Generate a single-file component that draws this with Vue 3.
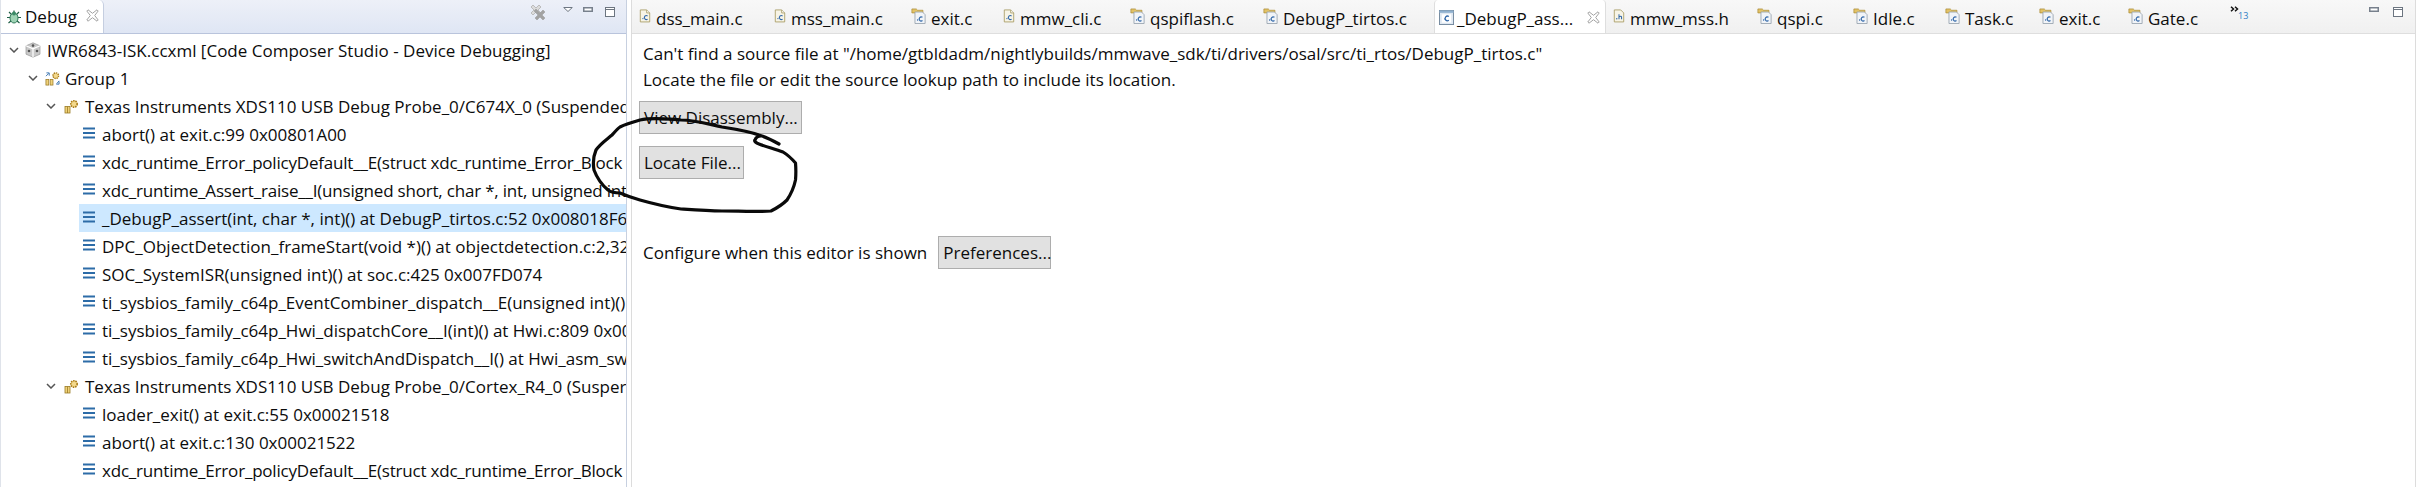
<script setup>
const rows = [
  { level: 0, icon: 'cube', text: 'IWR6843-ISK.ccxml [Code Composer Studio - Device Debugging]' },
  { level: 1, icon: 'group', text: 'Group 1' },
  { level: 2, icon: 'thread', text: 'Texas Instruments XDS110 USB Debug Probe_0/C674X_0 (Suspended' },
  { level: 3, text: 'abort() at exit.c:99 0x00801A00' },
  { level: 3, tight: true, text: 'xdc_runtime_Error_policyDefault__E(struct xdc_runtime_Error_Block' },
  { level: 3, tight: true, text: 'xdc_runtime_Assert_raise__I(unsigned short, char *, int, unsigned int' },
  { level: 3, selected: true, text: '_DebugP_assert(int, char *, int)() at DebugP_tirtos.c:52 0x008018F6' },
  { level: 3, text: 'DPC_ObjectDetection_frameStart(void *)() at objectdetection.c:2,32' },
  { level: 3, text: 'SOC_SystemISR(unsigned int)() at soc.c:425 0x007FD074' },
  { level: 3, text: 'ti_sysbios_family_c64p_EventCombiner_dispatch__E(unsigned int)()' },
  { level: 3, text: 'ti_sysbios_family_c64p_Hwi_dispatchCore__I(int)() at Hwi.c:809 0x00' },
  { level: 3, text: 'ti_sysbios_family_c64p_Hwi_switchAndDispatch__I() at Hwi_asm_sw' },
  { level: 2, icon: 'thread', text: 'Texas Instruments XDS110 USB Debug Probe_0/Cortex_R4_0 (Susper' },
  { level: 3, text: 'loader_exit() at exit.c:55 0x00021518' },
  { level: 3, text: 'abort() at exit.c:130 0x00021522' },
  { level: 3, tight: true, text: 'xdc_runtime_Error_policyDefault__E(struct xdc_runtime_Error_Block' }
]
const tabs = [
  { name: 'dss_main.c', icon: 'file', width: 135 },
  { name: 'mss_main.c', icon: 'file', width: 137 },
  { name: 'exit.c', icon: 'linked', width: 92 },
  { name: 'mmw_cli.c', icon: 'file', width: 127 },
  { name: 'qspiflash.c', icon: 'linked', width: 133 },
  { name: 'DebugP_tirtos.c', icon: 'linked', width: 171 },
  { name: '_DebugP_ass...', icon: 'active', width: 172, active: true },
  { name: 'mmw_mss.h', icon: 'header', width: 144 },
  { name: 'qspi.c', icon: 'linked', width: 96 },
  { name: 'Idle.c', icon: 'linked', width: 92 },
  { name: 'Task.c', icon: 'linked', width: 94 },
  { name: 'exit.c', icon: 'linked', width: 89 },
  { name: 'Gate.c', icon: 'linked', width: 102 }
]
</script>

<template>
  <div class="shot">
    <svg class="defs" width="0" height="0" aria-hidden="true">
      <defs>
        <symbol id="page" viewBox="0 0 14 18">
          <path d="M1.5 2.5h7.5l3.5 3.5v10.5h-11z" fill="#f7f4e6" stroke="#a79a62" />
          <path d="M9 2.5v3.5h3.5" fill="#fff" stroke="#a79a62" />
          <circle cx="4.6" cy="12.6" r=".8" fill="#2f66a8" />
          <path d="M10 9.6a2.3 2.3 0 1 0 0 3.6" fill="none" stroke="#2f66a8" stroke-width="1.3" />
        </symbol>
        <symbol id="page-h" viewBox="0 0 14 18">
          <path d="M1.5 2.5h7.5l3.5 3.5v10.5h-11z" fill="#f7f4e6" stroke="#a79a62" />
          <circle cx="4.4" cy="12.8" r=".8" fill="#2f66a8" />
          <path d="M7 7.5v6M7 10.500q3-1.600 3 .6v2.400" fill="none" stroke="#2f66a8" stroke-width="1.2" />
        </symbol>
        <symbol id="linked" viewBox="0 0 17 20">
          <path d="M1 2h5l1.5 1.5h6v3h-12.500z" fill="#e2c266" stroke="#a98a35" stroke-width=".8" />
          <path d="M4.500 5.500h8.500l3 3v10h-11.500z" fill="#f1f4f8" stroke="#9aa5b1" />
          <circle cx="7.500" cy="14.500" r=".8" fill="#2f66a8" />
          <path d="M13 11.500a2.300 2.300 0 1 0 0 3.600" fill="none" stroke="#2f66a8" stroke-width="1.300" />
        </symbol>
        <symbol id="active" viewBox="0 0 16 16">
          <rect x=".5" y=".5" width="15" height="15" fill="#dfe8f2" stroke="#71869c" />
          <rect x=".5" y=".5" width="15" height="2.500" fill="#8fb0cf" />
          <rect x="3" y="4.500" width="10" height="9" fill="#fff" />
          <path d="M10.500 7a2.500 2.500 0 1 0 0 4" fill="none" stroke="#2f66a8" stroke-width="1.400" />
        </symbol>
        <symbol id="close" viewBox="0 0 13 13">
          <path d="M2 .8 6.500 4.300 11 .8 12.200 2 8.700 6.500 12.200 11 11 12.200 6.500 8.700 2 12.200.8 11 4.300 6.500.8 2z" fill="#fff" stroke="#a3a3a3" />
        </symbol>
        <symbol id="minimize" viewBox="0 0 10 5">
          <rect x=".75" y=".75" width="8.500" height="3.500" fill="#fff" stroke="#77808c" stroke-width="1.500" />
        </symbol>
        <symbol id="maximize" viewBox="0 0 10 10">
          <rect x=".5" y=".5" width="9" height="9" fill="#fff" stroke="#6c7580" />
          <path d="M.5 2.500h9" stroke="#6c7580" />
        </symbol>
      </defs>
    </svg>

    <section class="debug">
      <header class="debug-head">
        <div class="debug-tab">
          <svg class="bug" viewBox="0 0 16 16">
            <path d="M3 3l3 3M13 3l-3 3M1 8.500h3M15 8.500h-3M2.500 14l3-2.500M13.500 14l-3-2.500M8 1.500v2" stroke="#1f5e46" stroke-width="1.200" fill="none" />
            <ellipse cx="8" cy="9" rx="4" ry="5" fill="#9fd3b5" stroke="#2f7a58" />
            <circle cx="8" cy="4.500" r="2" fill="#3b8a66" />
          </svg>
          <span>Debug</span>
          <svg class="close"><use href="#close" /></svg>
        </div>
        <div class="tools">
          <svg class="remove" viewBox="0 0 16 16">
            <path d="M1 3 3 1 6 4 9 1l2 2-3 3 3 3-2 2-3-3-3 3-2-2 3-3z" fill="#dcdcdc" stroke="#bcbcbc" />
            <path d="M4 7l2-2 4 4 3-3 2 2-3 3 3 3-2 2-3-3-3 3-2-2 3-3z" fill="#a2a2a2" stroke="#979797" stroke-width=".5" />
          </svg>
          <svg class="menu" viewBox="0 0 10 5"><path d="M.7.500h8.600L5 4.500z" fill="#fff" stroke="#6e7782" /></svg>
          <svg class="min"><use href="#minimize" /></svg>
          <svg class="max"><use href="#maximize" /></svg>
        </div>
      </header>
      <ul class="tree">
        <li v-for="(row, i) in rows" :key="i" class="row" :class="['level-' + row.level, { selected: row.selected, tight: row.tight }]">
          <svg v-if="row.level < 3" class="chevron" viewBox="0 0 10 6">
            <path d="M1 1l4 4 4-4" fill="none" stroke="#555" stroke-width="1.500" />
          </svg>
          <svg v-if="row.icon === 'cube'" class="ic-cube" viewBox="0 0 16 16">
            <path d="M8 .8l7 3v8.400l-7 3-7-3V3.800z" fill="#c9c9c9" stroke="#9a9a9a" stroke-width=".7" />
            <path d="M1 3.800l7 3 7-3M8 6.800v8.400" fill="none" stroke="#fff" stroke-width="1.200" />
            <circle cx="8" cy="3.600" r="1.300" fill="#555" />
            <circle cx="4" cy="9" r="1.300" fill="#555" />
            <circle cx="12" cy="9" r="1.300" fill="#555" />
          </svg>
          <svg v-else-if="row.icon === 'group'" class="ic-group" viewBox="0 0 16 16">
            <rect x="1" y="9" width="3" height="6" fill="#f0d27a" stroke="#9a7a25" stroke-width=".8" />
            <rect x="5.500" y="9" width="3" height="6" fill="#f0d27a" stroke="#9a7a25" stroke-width=".8" />
            <circle cx="11.500" cy="5" r="3" fill="#f4d98c" stroke="#a87c1c" stroke-width="1.500" stroke-dasharray="1.500 .8" />
            <path d="M1 5.500l3-3M1.500 2h3v3M15 10.500l-2.500 3M12 14h3v-3" fill="none" stroke="#3973b0" stroke-width="1" />
          </svg>
          <svg v-else-if="row.icon === 'thread'" class="ic-thread" viewBox="0 0 15 15">
            <rect x="1" y="7.500" width="5" height="6.500" fill="#f0d27a" stroke="#9a7a25" stroke-width=".8" />
            <path d="M3.500 7.500v6.500" stroke="#9a7a25" stroke-width=".8" />
            <circle cx="10" cy="5" r="3.200" fill="#f4d98c" stroke="#a87c1c" stroke-width="1.600" stroke-dasharray="1.500 .8" />
          </svg>
          <svg v-else-if="row.level === 3" class="ic-frame" viewBox="0 0 12 12">
            <path d="M0 1.500h12M0 6h12M0 10.500h12" stroke="#2d6ca8" stroke-width="2.200" />
          </svg>
          <span class="row-text">{{ row.text }}</span>
        </li>
      </ul>
    </section>

    <section class="editor">
      <header class="editor-head">
        <div v-for="(tab, i) in tabs" :key="i" class="etab" :class="{ active: tab.active }" :style="{ width: tab.width + 'px' }">
          <svg v-if="tab.icon === 'file'" class="ti-file"><use href="#page" /></svg>
          <svg v-else-if="tab.icon === 'header'" class="ti-file"><use href="#page-h" /></svg>
          <svg v-else-if="tab.icon === 'linked'" class="ti-linked"><use href="#linked" /></svg>
          <svg v-else class="ti-active"><use href="#active" /></svg>
          <span class="etab-label">{{ tab.name }}</span>
          <svg v-if="tab.active" class="close etab-close"><use href="#close" /></svg>
        </div>
        <div class="more">
          <svg class="more-arrows" viewBox="0 0 9 6"><path d="M1 .7 3.500 3 1 5.300M5 .7 7.500 3 5 5.300" fill="none" stroke="#111" stroke-width="1.500" /></svg>
          <span class="more-count">13</span>
        </div>
        <div class="tools tools-editor">
          <svg class="min"><use href="#minimize" /></svg>
          <svg class="max"><use href="#maximize" /></svg>
        </div>
      </header>
      <div class="body">
        <p class="message">Can't find a source file at "/home/gtbldadm/nightlybuilds/mmwave_sdk/ti/drivers/osal/src/ti_rtos/DebugP_tirtos.c"</p>
        <p class="message">Locate the file or edit the source lookup path to include its location.</p>
        <button class="btn first-btn">View Disassembly...</button>
        <button class="btn second-btn">Locate File...</button>
        <div class="configure">
          <span>Configure when this editor is shown</span>
          <button class="btn pref-btn">Preferences...</button>
        </div>
      </div>
    </section>

    <svg class="ink" viewBox="0 0 2423 487">
      <path d="M779 144C772 140 766 137 759 135C748 131 735 129 722 127C708 124 695 120 681 120C667 119 653 117 640 120C633 122 626 124 620 127C617 129 614 133 612 135C606 140 600 144 596 150C593 157 593 164 594 170C597 178 602 185 608 190C612 193 616 193 620 193C627 196 633 198 640 200C654 204 667 207 681 209C695 210 708 211 722 211C738 211 755 212 771 211C777 208 782 205 787 200C791 194 794 187 795.500 180C796 174 796 169 795.500 163C792 159 788 155 783 152C775 149 767 147 759 144C756 143 754 141 755 140C756 137 758 136 761 136" fill="none" stroke="#0a0a0a" stroke-width="3.200" stroke-linecap="round" stroke-linejoin="round" />
    </svg>
  </div>
</template>

<style scoped>
.shot {
  position: relative;
  display: flex;
  width: 2423px;
  height: 487px;
  overflow: hidden;
  background: #fff;
  color: #0c0c0c;
  font-family: "Open Sans", "Liberation Sans", sans-serif;
  font-size: 17px;
}
.defs { position: absolute; }
.debug {
  flex: 0 0 627px;
  min-width: 0;
  display: flex;
  flex-direction: column;
  box-sizing: border-box;
  border-left: 1px solid #dfe3ea;
  border-right: 1px solid #c7d0e0;
}
.debug-head {
  flex: 0 0 33px;
  display: flex;
  box-sizing: border-box;
  background: linear-gradient(#edf0f8, #dfe6f4);
  border-bottom: 1px solid #b9c4dc;
}
.debug-tab {
  display: flex;
  align-items: center;
  box-sizing: border-box;
  width: 103px;
  height: 33px;
  padding-left: 5px;
  background: #fff;
  border-right: 1px solid #c5cee0;
  border-top-right-radius: 5px;
}
.bug { width: 16px; height: 16px; margin-right: 3px; }
.close { width: 13px; height: 13px; }
.debug-tab .close { margin: -3px 0 0 9px; }
.tools { margin-left: auto; display: flex; align-items: flex-start; }
.remove { width: 16px; height: 16px; margin: 4px 17px 0 0; }
.menu { width: 10px; height: 5px; margin: 7px 10px 0 0; }
.min { width: 10px; height: 5px; margin: 7px 12px 0 0; }
.max { width: 10px; height: 10px; margin: 7px 11px 0 0; }
.tree { list-style: none; margin: 0; padding: 2px 0 0; overflow: hidden; }
.row {
  display: flex;
  align-items: center;
  height: 28px;
  white-space: nowrap;
  overflow: hidden;
}
.tight { letter-spacing: -0.2px; }
.row-text { flex: none; }
.chevron { flex: none; width: 10px; height: 6px; }
.level-0 { padding-left: 8px; }
.level-0 .chevron { margin-right: 6px; }
.level-1 { padding-left: 27px; }
.level-1 .chevron { margin-right: 7px; }
.level-2 { padding-left: 45px; }
.level-2 .chevron { margin-right: 8px; }
.level-3 { margin-left: 78px; padding-left: 4px; }
.selected { background: #cde8ff; }
.ic-cube { flex: none; width: 16px; height: 16px; margin-right: 6px; }
.ic-group { flex: none; width: 15px; height: 15px; margin-right: 5px; }
.ic-thread { flex: none; width: 15px; height: 15px; margin-right: 6px; }
.ic-frame { flex: none; width: 12px; height: 12px; margin-right: 7px; margin-top: -3px; }
.editor {
  flex: 1;
  min-width: 0;
  display: flex;
  flex-direction: column;
  box-sizing: border-box;
  margin-left: 4px;
  margin-right: 7px;
  border-left: 1px solid #dcdcdc;
  border-right: 1px solid #dcdcdc;
}
.editor-head {
  flex: 0 0 33px;
  display: flex;
  box-sizing: border-box;
  padding-left: 7px;
  background: linear-gradient(#f8f8f8, #f0f0f0);
  border-bottom: 1px solid #dedede;
}
.etab {
  flex: none;
  display: flex;
  align-items: flex-start;
  box-sizing: border-box;
  height: 32px;
  white-space: nowrap;
}
.etab-label { line-height: 22px; margin-top: 8px; }
.etab.active {
  height: 33px;
  padding-left: 4px;
  margin-right: 7px;
  background: #fff;
  border-left: 1px solid #dedede;
  border-right: 1px solid #dedede;
  border-top-left-radius: 4px;
  border-top-right-radius: 4px;
}
.ti-file { flex: none; width: 12px; height: 17px; margin: 7px 5px 0 0; }
.ti-linked { flex: none; width: 15px; height: 18px; margin: 7px 5px 0 0; }
.ti-active { flex: none; width: 15px; height: 15px; margin: 10px 3px 0 0; }
.etab-close { flex: none; margin: 11px 5px 0 auto; }
.more { position: relative; width: 24px; }
.more-arrows { position: absolute; left: 0; top: 6px; width: 9px; height: 6px; }
.more-count { position: absolute; left: 8px; top: 10px; font-size: 9px; line-height: 12px; color: #2f7cc4; }
.tools-editor .min { margin-right: 14px; }
.tools-editor .max { margin-right: 12px; }
.body { padding: 7px 0 0 11px; flex: 1; }
.message { margin: 0; height: 25.500px; line-height: 25.500px; white-space: nowrap; }
.btn {
  display: block;
  box-sizing: border-box;
  height: 33px;
  padding: 0 4px;
  margin-left: -4px;
  background: #e1e1e1;
  border: 1px solid #adadad;
  border-radius: 0;
  color: #0c0c0c;
  font: inherit;
  white-space: nowrap;
}
.first-btn { width: 163px; margin-top: 9px; }
.second-btn { width: 105px; margin-top: 12px; }
.configure { display: flex; align-items: center; gap: 11px; margin-top: 57px; }
.pref-btn { width: 113px; margin-left: 0; }
.ink { position: absolute; inset: 0; width: 2423px; height: 487px; pointer-events: none; }
</style>
